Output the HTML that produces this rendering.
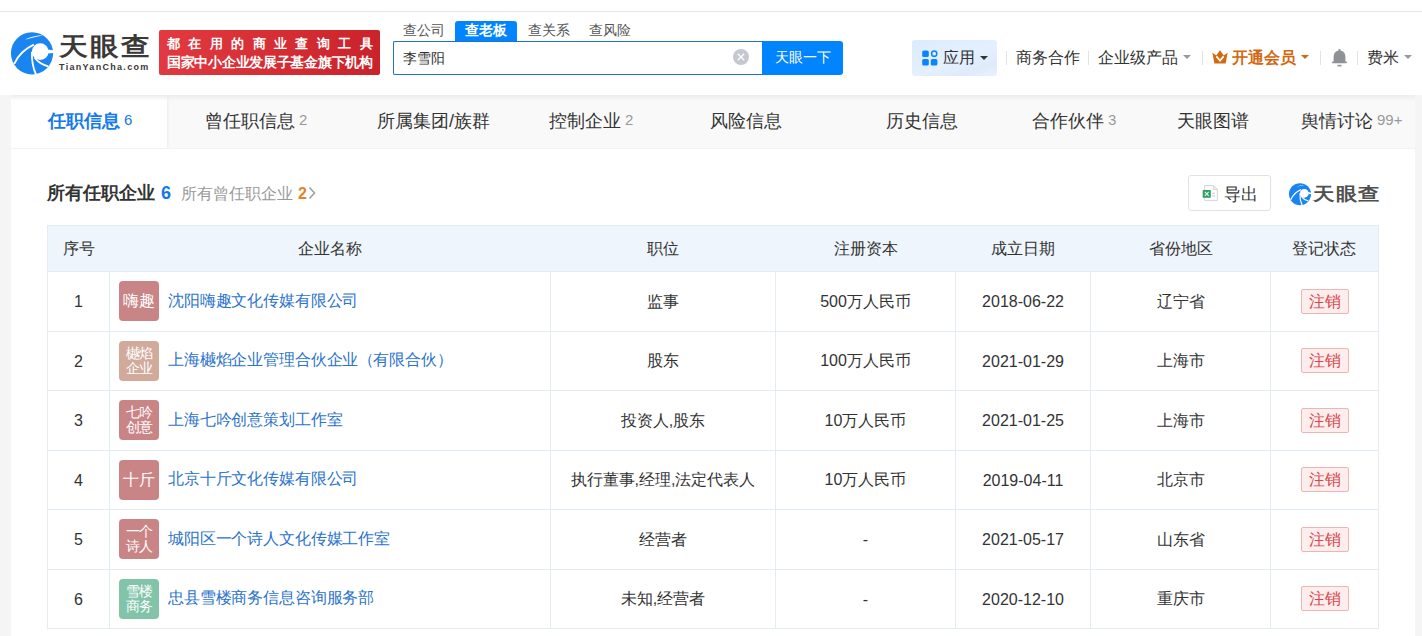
<!DOCTYPE html>
<html><head><meta charset="utf-8">
<style>
*{box-sizing:border-box;margin:0;padding:0}
html,body{width:1422px;height:636px;overflow:hidden}
body{position:relative;background:#f5f5f5;font-family:"Liberation Sans",sans-serif;color:#333}
.abs{position:absolute;white-space:nowrap}
#topline{position:absolute;left:0;top:0;width:1422px;height:12px;background:#fff;border-bottom:1px solid #e6e6e6}
#header{position:absolute;left:0;top:12px;width:1422px;height:83px;background:#fff}
#tabbar{position:absolute;left:11px;top:95px;width:1404px;height:53px;background:#f9f9f9}
#tabbar .shadow{position:absolute;left:0;top:0;width:100%;height:6px;background:linear-gradient(#ececec,rgba(249,249,249,0))}
#content{position:absolute;left:11px;top:148px;width:1404px;height:488px;background:#fff;border-top:1px solid #f2f2f2}
.tab{position:absolute;top:0;height:53px;line-height:53px;font-size:18px;color:#333;white-space:nowrap}
.tab .n{font-size:15px;color:#999;margin-left:4px;position:relative;top:-2px}
.tbl{position:absolute;left:47px;top:225px;width:1331px;border-collapse:collapse;table-layout:fixed}
.tbl th:first-child{border-left:1px solid #e4ecf3}.tbl th:last-child{border-right:1px solid #e4ecf3}
.tbl th{height:46px;padding-top:2px;background:#eef5fc;font-weight:normal;font-size:16px;color:#333;text-align:center;border-top:1px solid #e4ecf3;border-bottom:1px solid #e4ecf3}
.tbl td{border:1px solid #e4ecf3;font-size:16px;color:#333;text-align:center;height:59.5px;padding-top:2px}
.logo{position:relative;top:-1px;display:inline-block;width:40px;height:40px;border-radius:4px;color:#fff;text-align:center;vertical-align:middle;font-size:16px;line-height:40px;margin-right:9px}
.logo.l2{font-size:14px;line-height:15px;padding-top:5px;letter-spacing:-0.5px}
.tbl td.nm{text-align:left;padding-left:9px}
.tbl td.nm a{letter-spacing:-0.15px;color:#2b73cb;vertical-align:middle;position:relative;top:-1px}
.n{font-size:15px;color:#999;margin-left:4px;position:relative;top:-2px}
.tag{position:relative;top:-1px;display:inline-block;width:48px;height:25px;line-height:23px;border:1px solid #ebb6b6;background:#fdeded;color:#d6464b;border-radius:2px;font-size:16px}
</style></head><body>
<div id="topline"></div>
<div id="header">
</div>
<svg class="abs" style="left:9px;top:30px" width="46" height="46" viewBox="0 0 46 46">
  <circle cx="23" cy="23.3" r="21.1" fill="#1a85f0"/>
  <circle cx="31.2" cy="21.6" r="8.4" fill="#fff"/>
  <path d="M38.5 19.4 L46 20.5 L46 22.8 L39.2 23.6 Z" fill="#fff"/>
  <path d="M15.8 9.8 Q24 5.2 34.5 5.2 Q24 7.2 15.8 9.8 Z" fill="#fff"/>
  <path d="M5.2 33.8 Q11 21 24.8 14.6" stroke="#fff" stroke-width="1.8" fill="none"/>
  <path d="M22.9 22 Q22.5 35 27.2 45" stroke="#fff" stroke-width="1.8" fill="none"/>
  <path d="M25.6 27.6 Q30 34 39.2 36.4" stroke="#fff" stroke-width="1.8" fill="none"/>
</svg>
<div class="abs" id="brand" style="left:59px;top:29px;font-size:29px;font-weight:bold;color:#3b3838;line-height:34px;letter-spacing:2px;transform:scaleY(0.87);transform-origin:0 17px">天眼查</div>
<div class="abs" id="brand2" style="left:59px;top:61px;font-size:9px;font-weight:bold;color:#3b3838;line-height:12px;letter-spacing:1.3px">TianYanCha.com</div>
<div class="abs" id="banner" style="left:159px;top:30px;width:221px;height:45px;border-radius:2px;background:linear-gradient(100deg,#e23a40,#c9222a)"></div>
<div class="abs" id="b1" style="left:167px;top:35px;font-size:13px;font-weight:bold;color:#fff;line-height:18px;letter-spacing:8.4px">都在用的商业查询工具</div>
<div class="abs" id="b2" style="left:167px;top:54px;letter-spacing:-0.28px;font-size:13.5px;font-weight:bold;color:#fff;line-height:18px">国家中小企业发展子基金旗下机构</div>
<div class="abs" style="left:403px;top:20px;font-size:14px;color:#555;line-height:20px">查公司</div>
<div class="abs" style="left:455px;top:21px;width:62px;height:21px;background:#0084ff;border-radius:3px 3px 0 0"></div>
<div class="abs" style="left:465px;top:20px;font-size:14px;font-weight:bold;color:#fff;line-height:20px">查老板</div>
<div class="abs" style="left:528px;top:20px;font-size:14px;color:#555;line-height:20px">查关系</div>
<div class="abs" style="left:589px;top:20px;font-size:14px;color:#555;line-height:20px">查风险</div>
<div class="abs" style="left:393px;top:41px;width:370px;height:34px;border:1px solid #1f70cc;border-right:none;border-radius:2px 0 0 2px;background:#fff"></div>
<div class="abs" style="left:403px;top:47px;font-size:14px;color:#333;line-height:22px">李雪阳</div>
<svg class="abs" style="left:732.5px;top:48.7px" width="16" height="16" viewBox="0 0 16 16"><circle cx="8" cy="8" r="8" fill="#c5c8ce"/><path d="M4.8 4.8 L11.2 11.2 M11.2 4.8 L4.8 11.2" stroke="#fff" stroke-width="1.3"/></svg>
<div class="abs" style="left:762px;top:41px;width:81px;height:34px;background:#0084ff;border-radius:0 3px 3px 0;color:#fff;font-size:14px;line-height:32px;text-align:center">天眼一下</div>

<div class="abs" style="left:912px;top:40px;width:85px;height:36px;background:linear-gradient(160deg,#dcebfd,#e4f0fe 55%,#dfeafb 80%,#e9f2fd);border-radius:3px"></div>
<svg class="abs" style="left:922px;top:50px" width="16" height="16" viewBox="0 0 16 16">
  <rect x="0.2" y="0.4" width="6.6" height="6.6" rx="1.6" fill="#0a84ff"/>
  <circle cx="12.2" cy="3.7" r="2.6" fill="none" stroke="#0a84ff" stroke-width="1.5"/>
  <rect x="0.2" y="9" width="6.6" height="6.6" rx="1.6" fill="#0a84ff"/>
  <rect x="8.8" y="9" width="6.6" height="6.6" rx="1.6" fill="#0a84ff"/>
</svg>
<div class="abs" style="left:943px;top:47px;font-size:15.5px;color:#333;line-height:22px">应用</div>
<div class="abs" style="left:980px;top:56px;width:0;height:0;border-left:4px solid transparent;border-right:4px solid transparent;border-top:4px solid #333"></div>
<div class="abs" style="left:1006px;top:51px;width:1px;height:14px;background:#e3e3e3"></div>
<div class="abs" style="left:1016px;top:47px;font-size:15.5px;color:#333;line-height:22px">商务合作</div>
<div class="abs" style="left:1088px;top:51px;width:1px;height:14px;background:#e3e3e3"></div>
<div class="abs" style="left:1098px;top:47px;font-size:15.5px;color:#333;line-height:22px">企业级产品</div>
<div class="abs" style="left:1183px;top:55px;width:0;height:0;border-left:4px solid transparent;border-right:4px solid transparent;border-top:4px solid #999"></div>
<div class="abs" style="left:1202px;top:51px;width:1px;height:14px;background:#e3e3e3"></div>
<svg class="abs" style="left:1212px;top:50px" width="16" height="14" viewBox="0 0 16 14">
  <path d="M0.4 2.8 L4.2 5.4 L8 0.3 L11.8 5.4 L15.6 2.8 L13.6 13.6 L2.4 13.6 Z" fill="#d4680f"/>
  <path d="M4.4 6.4 L8 10.6 L11.6 6.4" stroke="#fff" stroke-width="1.7" fill="none"/>
</svg>
<div class="abs" style="left:1232px;top:47px;font-size:15.5px;font-weight:bold;color:#d4680f;line-height:22px">开通会员</div>
<div class="abs" style="left:1301px;top:55px;width:0;height:0;border-left:4px solid transparent;border-right:4px solid transparent;border-top:4px solid #d4680f"></div>
<div class="abs" style="left:1320px;top:51px;width:1px;height:14px;background:#e3e3e3"></div>
<svg class="abs" style="left:1332px;top:49px" width="15" height="18" viewBox="0 0 15 18">
  <rect x="6.5" y="0" width="2" height="2.5" rx="0.8" fill="#8e9196"/>
  <path d="M7.5 1.6 C3.4 1.6 1.6 4.8 1.6 8.5 L1.6 13.2 L13.4 13.2 L13.4 8.5 C13.4 4.8 11.6 1.6 7.5 1.6Z" fill="#8e9196"/>
  <rect x="0" y="12.6" width="15" height="1.6" rx="0.8" fill="#8e9196"/>
  <rect x="5.5" y="15.8" width="4" height="1.6" fill="#8e9196"/>
</svg>
<div class="abs" style="left:1357px;top:51px;width:1px;height:14px;background:#e3e3e3"></div>
<div class="abs" style="left:1367px;top:47px;font-size:15.5px;color:#333;line-height:22px">费米</div>
<div class="abs" style="left:1404px;top:55px;width:0;height:0;border-left:4px solid transparent;border-right:4px solid transparent;border-top:4px solid #999"></div>
<div id="tabbar">
  <div style="position:absolute;left:0;top:0;width:156px;height:53px;background:#fff"></div>
  <div style="position:absolute;left:156px;top:0;width:3px;height:53px;background:linear-gradient(90deg,#efefef,rgba(249,249,249,0))"></div>
  <div class="shadow"></div>
</div>
<div id="content"></div>
<div class="abs" style="left:48px;top:108px;font-size:18px;font-weight:bold;color:#137aec;line-height:26px">任职信息<span style="font-size:15px;font-weight:normal;margin-left:4px;position:relative;top:-2px">6</span></div>
<div class="abs" style="left:205px;top:108px;font-size:18px;color:#333;line-height:26px">曾任职信息<span class="n">2</span></div>
<div class="abs" style="left:377px;top:108px;font-size:18px;color:#333;line-height:26px">所属集团/族群</div>
<div class="abs" style="left:549px;top:108px;font-size:18px;color:#333;line-height:26px">控制企业<span class="n">2</span></div>
<div class="abs" style="left:710px;top:108px;font-size:18px;color:#333;line-height:26px">风险信息</div>
<div class="abs" style="left:886px;top:108px;font-size:18px;color:#333;line-height:26px">历史信息</div>
<div class="abs" style="left:1032px;top:108px;font-size:18px;color:#333;line-height:26px">合作伙伴<span class="n">3</span></div>
<div class="abs" style="left:1177px;top:108px;font-size:18px;color:#333;line-height:26px">天眼图谱</div>
<div class="abs" style="left:1301px;top:108px;font-size:18px;color:#333;line-height:26px">舆情讨论<span class="n">99+</span></div>

<div class="abs" style="left:47px;top:180px;font-size:18px;font-weight:bold;color:#333;line-height:26px">所有任职企业<span style="color:#137aec;margin-left:6px">6</span></div>
<div class="abs" style="left:181px;top:182px;font-size:16px;color:#999;line-height:24px">所有曾任职企业<span style="color:#e5822b;font-weight:bold;margin-left:5px">2</span></div>
<svg class="abs" style="left:308px;top:186px" width="8" height="14" viewBox="0 0 8 14"><path d="M1.5 1.5 L6.5 7 L1.5 12.5" stroke="#999" stroke-width="1.4" fill="none"/></svg>

<div class="abs" style="left:1188px;top:175px;width:83px;height:36px;border:1px solid #dfe3e8;border-radius:3px;background:#fff"></div>
<svg class="abs" style="left:1202px;top:185px" width="16" height="16" viewBox="0 0 16 16">
  <path d="M2.7 0.5 L11.5 0.5 L15.3 4.3 L15.3 15.4 L2.7 15.4 Z" fill="#fff" stroke="#d3d5d8" stroke-width="1"/>
  <path d="M11.3 0.7 L11.3 4.5 L15.1 4.5" fill="#eceef0" stroke="#d3d5d8" stroke-width="0.9"/>
  <rect x="10" y="7.6" width="3" height="1.4" fill="#d8d8d8"/><rect x="10" y="10.2" width="3" height="1.4" fill="#d8d8d8"/>
  <rect x="0.7" y="4.9" width="8.1" height="7.8" rx="0.5" fill="#2f9e63"/>
  <path d="M2.8 6.9 L6.7 10.8 M6.7 6.9 L2.8 10.8" stroke="#dff7e8" stroke-width="1.2"/>
</svg>
<div class="abs" style="left:1224px;top:182px;font-size:16.5px;color:#333;line-height:24px">导出</div>
<svg class="abs" style="left:1288px;top:182px" width="24" height="24" viewBox="0 0 46 46">
  <circle cx="23" cy="23.3" r="21.1" fill="#1a85f0"/>
  <circle cx="31.2" cy="21.6" r="8.4" fill="#fff"/>
  <path d="M38.5 19.4 L46 20.5 L46 22.8 L39.2 23.6 Z" fill="#fff"/>
  <path d="M15.8 9.8 Q24 5.2 34.5 5.2 Q24 7.2 15.8 9.8 Z" fill="#fff"/>
  <path d="M5.2 33.8 Q11 21 24.8 14.6" stroke="#fff" stroke-width="2.3" fill="none"/>
  <path d="M22.9 22 Q22.5 35 27.2 45" stroke="#fff" stroke-width="2.3" fill="none"/>
  <path d="M25.6 27.6 Q30 34 39.2 36.4" stroke="#fff" stroke-width="2.3" fill="none"/>
</svg>
<div class="abs" id="brandS" style="left:1313px;top:180px;font-size:21px;font-weight:bold;color:#505050;line-height:28px;letter-spacing:1.5px;transform:scaleY(0.84);transform-origin:0 14px">天眼查</div>

<table class="tbl">
<colgroup><col style="width:62px"><col style="width:441px"><col style="width:225px"><col style="width:180px"><col style="width:135px"><col style="width:180px"><col style="width:108px"></colgroup>
<tr><th>序号</th><th>企业名称</th><th>职位</th><th>注册资本</th><th>成立日期</th><th>省份地区</th><th>登记状态</th></tr>
<tr><td>1</td><td class="nm"><span class="logo" style="background:#c98486">嗨趣</span><a>沈阳嗨趣文化传媒有限公司</a></td><td>监事</td><td>500万人民币</td><td>2018-06-22</td><td>辽宁省</td><td><span class="tag">注销</span></td></tr>
<tr><td>2</td><td class="nm"><span class="logo l2" style="background:#d2aa9c">樾焰<br>企业</span><a>上海樾焰企业管理合伙企业<span style="letter-spacing:-1px">（</span>有限合伙<span style="letter-spacing:-1px">）</span></a></td><td>股东</td><td>100万人民币</td><td>2021-01-29</td><td>上海市</td><td><span class="tag">注销</span></td></tr>
<tr><td>3</td><td class="nm"><span class="logo l2" style="background:#c98486">七吟<br>创意</span><a>上海七吟创意策划工作室</a></td><td>投资人,股东</td><td>10万人民币</td><td>2021-01-25</td><td>上海市</td><td><span class="tag">注销</span></td></tr>
<tr><td>4</td><td class="nm"><span class="logo" style="background:#c98486">十斤</span><a>北京十斤文化传媒有限公司</a></td><td>执行董事,经理,法定代表人</td><td>10万人民币</td><td>2019-04-11</td><td>北京市</td><td><span class="tag">注销</span></td></tr>
<tr><td>5</td><td class="nm"><span class="logo l2" style="background:#c98486">一个<br>诗人</span><a>城阳区一个诗人文化传媒工作室</a></td><td>经营者</td><td>-</td><td>2021-05-17</td><td>山东省</td><td><span class="tag">注销</span></td></tr>
<tr><td>6</td><td class="nm"><span class="logo l2" style="background:#82c4aa">雪楼<br>商务</span><a>忠县雪楼商务信息咨询服务部</a></td><td>未知,经营者</td><td>-</td><td>2020-12-10</td><td>重庆市</td><td><span class="tag">注销</span></td></tr>
</table>

</body></html>
